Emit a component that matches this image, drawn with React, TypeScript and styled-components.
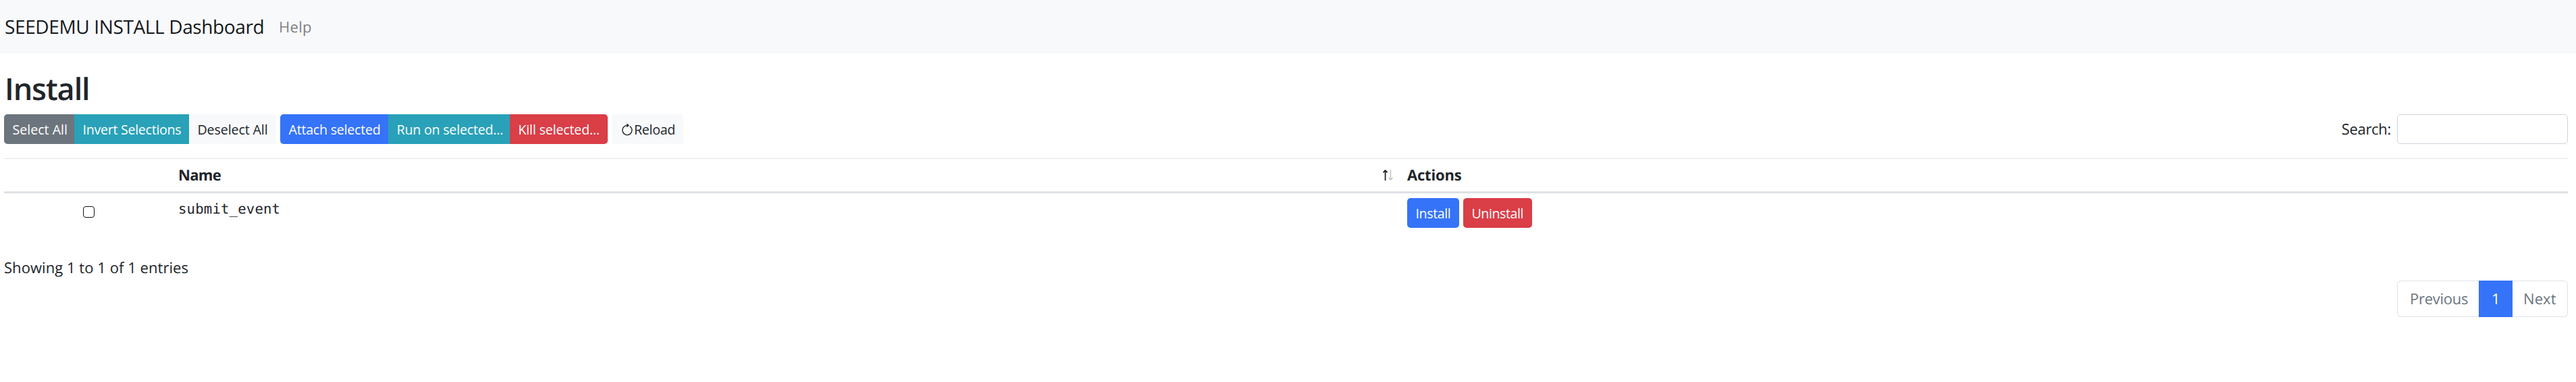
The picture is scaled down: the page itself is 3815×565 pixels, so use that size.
import React from 'react';
import styled, { createGlobalStyle } from 'styled-components';

const GlobalStyle = createGlobalStyle`
  *, *::before, *::after { box-sizing: border-box; }
  body {
    margin: 0;
    background: #fff;
    color: #212529;
    font-family: 'Open Sans', 'Noto Sans', sans-serif;
    font-size: 22px;
    line-height: 34px;
    text-rendering: geometricPrecision;
  }
  button, input { font-family: inherit; margin: 0; }
`;

const tones = {
  primary: ['#3573f8', '#fff'],
  info: ['#29a1b8', '#fff'],
  danger: ['#da3e47', '#fff'],
  secondary: ['#6c757d', '#fff'],
  light: ['#f8f9fb', '#212529'],
};
type Tone = keyof typeof tones;

const Navbar = styled.nav`
  display: flex;
  align-items: center;
  height: 79px;
  padding-left: 7px;
  background: #f8f9fb;
`;

const Brand = styled.a`
  width: 406px;
  font-size: 28px;
  line-height: 40px;
  letter-spacing: -0.37px;
  color: #16191b;
`;

const NavLink = styled.a`
  letter-spacing: 0.3px;
  color: #808182;
`;

const Content = styled.main`
  padding: 0 12px 0 6px;
`;

const Title = styled.h1`
  margin: 0;
  padding: 26px 0 0 1px;
  height: 90px;
  font-size: 45px;
  font-weight: 600;
  line-height: 54px;
  letter-spacing: -1.1px;
`;

const Toolbar = styled.div`
  display: flex;
  height: 44px;
  margin-bottom: 21px;
`;

const Group = styled.div`
  display: flex;
  margin-right: 6px;
  border-radius: 5px;
  overflow: hidden;
`;

const Button = styled.button<{ $tone: Tone; $width: number; $track?: number; $round?: boolean }>`
  display: flex;
  align-items: center;
  width: ${(p) => p.$width}px;
  height: 44px;
  padding: 0 0 0 12.5px;
  border: 0;
  border-radius: ${(p) => (p.$round ? 5 : 0)}px;
  background: ${(p) => tones[p.$tone][0]};
  color: ${(p) => tones[p.$tone][1]};
  font-size: 19.6px;
  line-height: 43px;
  letter-spacing: ${(p) => p.$track ?? 0}px;
  white-space: nowrap;
`;

const ReloadIcon = styled.svg`
  width: 16px;
  height: 20px;
  margin: 1px 2px 0 2.5px;
  flex: none;
`;

const Search = styled.label`
  display: flex;
  align-items: center;
  margin-left: auto;
  line-height: 46px;
  letter-spacing: -0.3px;
`;

const SearchInput = styled.input`
  width: 253px;
  height: 44px;
  margin-left: 9px;
  border: 1px solid #ced4da;
  border-radius: 5px;
  background: #fff;
`;

const Table = styled.table`
  width: 100%;
  table-layout: fixed;
  border-spacing: 0;
  border-top: 1px solid #dee2e6;
`;

const Col = styled.col<{ $width?: number }>`
  width: ${(p) => (p.$width ? `${p.$width}px` : 'auto')};
`;

const Th = styled.th<{ $track: number }>`
  height: 51px;
  padding: 0 10px 0 11px;
  border-bottom: 3px solid #dee2e6;
  font-weight: 700;
  line-height: 48px;
  letter-spacing: ${(p) => p.$track}px;
  text-align: left;
`;

const HeadCell = styled.div`
  display: flex;
  align-items: center;
  justify-content: space-between;
`;

const Td = styled.td`
  height: 58px;
  padding: 7px 11px;
  vertical-align: top;
`;

const CheckCell = styled(Td)`
  padding: 19px 0 0 117px;
`;

const Checkbox = styled.input`
  display: block;
  appearance: none;
  width: 17px;
  height: 17px;
  border: 1.4px solid #111;
  border-radius: 4px;
  background: #fff;
`;

const Mono = styled.div`
  font-family: 'DejaVu Sans Mono', monospace;
  font-size: 20.6px;
  line-height: 32px;
  letter-spacing: 0.2px;
`;

const Actions = styled.div`
  display: flex;
  gap: 6px;
`;

const Footer = styled.footer`
  display: flex;
  flex-direction: column;
  padding-top: 35px;
`;

const Info = styled.div`
  height: 36px;
  letter-spacing: 0.05px;
`;

const Pagination = styled.div`
  display: flex;
  align-self: flex-end;
  width: 253px;
  height: 54px;
  border-radius: 6px;
  box-shadow: inset 0 0 0 1px #dee2e6;
`;

const Page = styled.a<{ $width: number; $active?: boolean; $track?: number }>`
  width: ${(p) => p.$width}px;
  padding-left: 19px;
  height: 54px;
  line-height: 55px;
  letter-spacing: ${(p) => p.$track ?? 0}px;
  background: ${(p) => (p.$active ? '#3573f8' : 'transparent')};
  color: ${(p) => (p.$active ? '#fff' : '#6c757d')};
`;

const NextPage = styled(Page)`
  padding-left: 16px;
`;

export default function App() {
  return (
    <>
      <GlobalStyle />
      <Navbar>
        <Brand>SEEDEMU INSTALL Dashboard</Brand>
        <NavLink>Help</NavLink>
      </Navbar>
      <Content>
        <Title>Install</Title>
        <Toolbar>
          <Group>
            <Button $tone="secondary" $width={104}>Select All</Button>
            <Button $tone="info" $width={170} $track={-0.27}>Invert Selections</Button>
            <Button $tone="light" $width={129} $track={-0.1}>Deselect All</Button>
          </Group>
          <Group>
            <Button $tone="primary" $width={160} $track={-0.23}>Attach selected</Button>
            <Button $tone="info" $width={180} $track={-0.2}>Run on selected...</Button>
            <Button $tone="danger" $width={145} $track={-0.16}>Kill selected...</Button>
          </Group>
          <Button $tone="light" $width={106} $track={-0.3} $round>
            <ReloadIcon viewBox="0 0 16 20" fill="none" stroke="#212529" strokeWidth="1.4">
              <path d="M11.8 4.8A7 7 0 1 1 7.6 3.6" />
              <path d="M7.2 0.6L11 3.5L7.2 6.4Z" fill="#212529" stroke="none" />
            </ReloadIcon>
            Reload
          </Button>
          <Search>
            Search:
            <SearchInput type="search" />
          </Search>
        </Toolbar>
        <Table>
          <colgroup>
            <Col $width={247} />
            <Col $width={1820} />
            <Col />
          </colgroup>
          <thead>
            <tr>
              <Th $track={0} />
              <Th $track={-0.7}>
                <HeadCell>
                  Name
                  <svg width="15" height="16" viewBox="0 0 15 16" fill="none" strokeWidth="1.8">
                    <path d="M3.6 16V1.5M0.6 4.2L3.6 1L6.6 4.2" stroke="#212529" />
                    <path d="M11.4 0V14.5M8.4 11.8L11.4 15L14.4 11.8" stroke="#c8c9ca" />
                  </svg>
                </HeadCell>
              </Th>
              <Th $track={-0.2}>Actions</Th>
            </tr>
          </thead>
          <tbody>
            <tr>
              <CheckCell><Checkbox type="checkbox" /></CheckCell>
              <Td><Mono>submit_event</Mono></Td>
              <Td>
                <Actions>
                  <Button $tone="primary" $width={77} $track={-0.38} $round>Install</Button>
                  <Button $tone="danger" $width={102} $track={-0.42} $round>Uninstall</Button>
                </Actions>
              </Td>
            </tr>
          </tbody>
        </Table>
        <Footer>
          <Info>Showing 1 to 1 of 1 entries</Info>
          <Pagination>
            <Page $width={121} $track={-0.26}>Previous</Page>
            <Page $width={50} $active>1</Page>
            <NextPage $width={82} $track={0.1}>Next</NextPage>
          </Pagination>
        </Footer>
      </Content>
    </>
  );
}
